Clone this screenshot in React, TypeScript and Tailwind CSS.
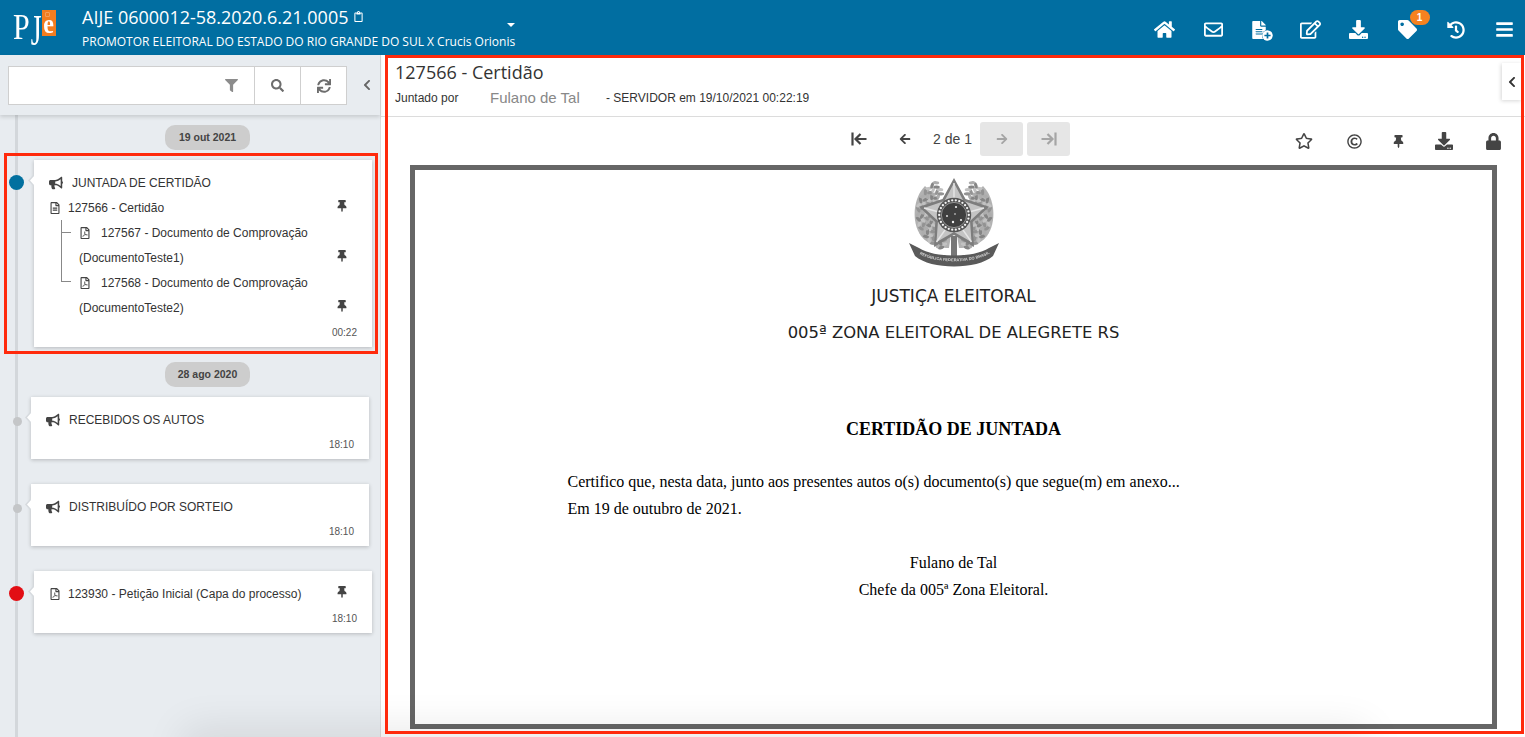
import React from "react";
import {
  FaHome, FaRegEnvelope, FaFileAlt, FaPlusCircle, FaRegEdit, FaDownload, FaTag, FaHistory, FaBars,
  FaFilter, FaSearch, FaSync, FaChevronLeft, FaBullhorn, FaThumbtack, FaRegFileAlt, FaRegFilePdf,
  FaRegStar, FaRegCopyright, FaLock, FaArrowLeft, FaArrowRight, FaRegClipboard,
} from "react-icons/fa";

function BarArrow({ dir, className }: { dir: "left" | "right"; className?: string }) {
  return (
    <svg viewBox="0 0 16 14" width="16" height="14" className={className} fill="none" stroke="currentColor" strokeWidth="2.2">
      {dir === "left" ? (
        <>
          <path d="M1.5 0.5V13.5" />
          <path d="M15.5 7H4.5M9.5 2L4.5 7L9.5 12" />
        </>
      ) : (
        <>
          <path d="M14.5 0.5V13.5" />
          <path d="M0.5 7H11.5M6.5 2L11.5 7L6.5 12" />
        </>
      )}
    </svg>
  );
}

function Brasao() {
  const dots = Array.from({ length: 26 }, (_, i) => {
    const a = (i / 26) * Math.PI * 2;
    return [45 + 14.8 * Math.cos(a), 37 + 14.8 * Math.sin(a)];
  });
  const leaves: { x: number; y: number; r: number; c: string }[] = [];
  for (let ring = 0; ring < 4; ring++) {
    const rad = 24 + ring * 4;
    for (let i = 0; i < 18; i++) {
      const deg = 108 + i * 7.6 + (ring % 2) * 3;
      const a = (deg * Math.PI) / 180;
      const c = ["#adadad", "#939393", "#c2c2c2", "#858585"][(i + ring) % 4];
      leaves.push({ x: Math.cos(a) * rad, y: Math.sin(a) * rad, r: deg + 90 + (i % 2 ? 35 : -35), c });
    }
  }
  return (
    <svg viewBox="0 0 90 90" width="90" height="90" className="blur-[0.5px]">
      <path d="M16 8C4 20 2 44 12 58C20 68 32 70 40 70L45 37Z" fill="#b2b2b2" />
      <path d="M74 8C86 20 88 44 78 58C70 68 58 70 50 70L45 37Z" fill="#b2b2b2" />
      {leaves.map((l, i) => (
        <g key={i}>
          <ellipse cx={45 + l.x} cy={36 + l.y} rx="3.2" ry="1.6" fill={l.c} transform={`rotate(${l.r} ${45 + l.x} ${36 + l.y})`} />
          <ellipse cx={45 - l.x} cy={36 + l.y} rx="3.2" ry="1.6" fill={l.c} transform={`rotate(${-l.r} ${45 - l.x} ${36 + l.y})`} />
        </g>
      ))}
      <rect x="42" y="58" width="6" height="20" fill="#777" />
      <polygon points="45,0 56.5,21 80,28.7 63.7,44 65,69 45,57 25,69 26.3,44 10,28.7 33.5,21" fill="#7d7d7d" />
      <polygon points="45,5 54.5,23 75,30 61,43 62.5,64 45,54 27.5,64 29,43 15,30 35.5,23" fill="#c4c4c4" />
      <path d="M45 5V20M15 30L30 34M75 30L60 34M27.5 64L36 52M62.5 64L54 52" stroke="#e6e6e6" strokeWidth="1.4" />
      <circle cx="45" cy="37" r="17.2" fill="#565656" />
      <circle cx="45" cy="37" r="12.6" fill="#3f3f3f" stroke="#dcdcdc" strokeWidth="0.5" />
      {dots.map(([x, y], i) => <circle key={i} cx={x} cy={y} r="1.15" fill="#f4f4f4" />)}
      <g fill="#efefef">
        <circle cx="47" cy="29" r="1.1" /><circle cx="44" cy="44" r="1.2" /><circle cx="38" cy="38" r="0.9" /><circle cx="46" cy="36" r="0.8" /><circle cx="52" cy="42" r="1.1" />
      </g>
      <path d="M0 65L10 70C25 80 65 80 80 70L90 65L84 78C68 92 22 92 6 78Z" fill="#5a5a5a" />
      <path id="fita-brasao" d="M9 75C24 86 66 86 81 75" fill="none" />
      <text fontSize="4" fontWeight="700" fill="#d8d8d8" fontFamily="'Liberation Sans', sans-serif">
        <textPath href="#fita-brasao" startOffset="2">REPÚBLICA FEDERATIVA DO BRASIL</textPath>
      </text>
    </svg>
  );
}

function Pill({ children }: { children: React.ReactNode }) {
  return (
    <div className="flex justify-center pl-[35px]">
      <div className="flex h-[25px] w-[85px] items-center justify-center rounded-[10px] bg-[#cdcdcd] text-[10.5px] font-bold text-[#444]">
        {children}
      </div>
    </div>
  );
}

function Card({ dot, children, inset, time }: { dot: "blue" | "gray" | "red"; children: React.ReactNode; inset?: boolean; time: string }) {
  return (
    <div className={`relative bg-white shadow-[0_1px_4px_rgba(0,0,0,0.22)] ${inset ? "ml-[31px] mr-[11px]" : "ml-[34px] mr-[8px]"}`}>
      <div className="absolute left-[-6px] top-[14px] h-[13px] w-[6px] bg-[#d6dade] [clip-path:polygon(100%_0,0_50%,100%_100%)]" />
      <div className="absolute left-[-4px] top-[15px] h-[11px] w-[5px] bg-white [clip-path:polygon(100%_0,0_50%,100%_100%)]" />
      {dot === "blue" && <div className="absolute left-[-25.5px] top-[15px] h-[15px] w-[15px] rounded-full bg-[#02709f]" />}
      {dot === "red" && <div className="absolute left-[-25.5px] top-[15px] h-[15px] w-[15px] rounded-full bg-[#e20e14]" />}
      {dot === "gray" && <div className="absolute left-[-18.5px] top-[19.5px] h-[9px] w-[9px] rounded-full bg-[#c4c6c8]" />}
      <div className="pl-[15px] pr-[15px] pt-[10px]">
        {children}
        <div className="mt-[5px] flex h-[15px] items-center justify-end text-[10px] text-[#555]">{time}</div>
        <div className="h-[7px]" />
      </div>
    </div>
  );
}

function Row({ children, pin, className = "" }: { children?: React.ReactNode; pin?: boolean; className?: string }) {
  return (
    <div className={`flex h-[25px] items-center text-[12px] text-[#333] ${className}`}>
      <div className="flex flex-1 items-center">{children}</div>
      {pin && <FaThumbtack className="mr-[9px] mt-[-3px] text-[12px] text-[#444]" />}
    </div>
  );
}

function Evento({ text }: { text: string }) {
  return (
    <>
      <FaBullhorn className="mr-[9px] text-[14px] text-[#444]" />
      <span>{text}</span>
    </>
  );
}

export default function App() {
  const fontOpen = "font-['Open_Sans',sans-serif]";
  return (
    <div className="relative flex h-screen w-full flex-col overflow-hidden bg-white font-['Liberation_Sans',Arial,sans-serif]">
      {/* Cabeçalho */}
      <header className="flex h-[55px] shrink-0 items-center bg-[#016ea1] pr-[6px] text-white">
        <div className="relative ml-[13px] flex h-[55px] w-[69px] shrink-0 font-['Liberation_Serif',serif]">
          <span className="mt-[6px] inline-block h-[36px] origin-top scale-y-[1.18] text-[30px] leading-[36px]">P</span>
          <span className="ml-[1px] mt-[3px] inline-block h-[36px] w-[11px] origin-top scale-y-[1.55] text-[28px] leading-[36px]">J</span>
          <div className="relative mt-[10px] flex h-[26px] w-[14px] items-end justify-center bg-[#f37d20] pb-[3px] font-bold">
            <span className="absolute left-[3px] top-[2px] h-[5px] w-[5px] rounded-[1px] border border-white/25" />
            <span className="inline-block origin-bottom scale-y-[1.15] text-[24px] leading-[16px]">e</span>
          </div>
        </div>
        <div className={`${fontOpen} flex flex-col`}>
          <div className="mt-[-1px] flex h-[24px] items-center text-[18px] leading-[24px]">
            AIJE 0600012-58.2020.6.21.0005
            <FaRegClipboard className="ml-[5px] text-[11px]" />
          </div>
          <div className="mt-[5px] text-[12px] leading-[16px]">PROMOTOR ELEITORAL DO ESTADO DO RIO GRANDE DO SUL X Crucis Orionis</div>
        </div>
        <div className="mb-[6px] ml-[-8px] h-0 w-0 self-center border-x-[4px] border-t-[4px] border-x-transparent border-t-white" />
        <div className="ml-auto mt-[4px] flex items-center gap-[18.5px]">
          <div className="flex w-[30px] justify-center"><FaHome className="text-[21px]" /></div>
          <div className="flex w-[30px] justify-center"><FaRegEnvelope className="text-[19px]" /></div>
          <div className="flex w-[30px] justify-center">
            <div className="relative mr-[5px]">
              <FaFileAlt className="text-[18px]" />
              <FaPlusCircle className="absolute bottom-[-2px] right-[-5px] rounded-full bg-[#016ea1] text-[11px] text-white" />
            </div>
          </div>
          <div className="flex w-[30px] justify-center"><FaRegEdit className="text-[21px]" /></div>
          <div className="flex w-[30px] justify-center"><FaDownload className="text-[19px]" /></div>
          <div className="flex w-[30px] justify-center">
            <div className="relative">
              <FaTag className="text-[19px]" />
              <span className="absolute left-[12px] top-[-10px] flex h-[15px] w-[20px] items-center justify-center rounded-full bg-[#f58220] text-[10px] font-bold">1</span>
            </div>
          </div>
          <div className="flex w-[30px] justify-center"><FaHistory className="text-[18px]" /></div>
          <div className="flex w-[30px] justify-center"><FaBars className="text-[19px]" /></div>
        </div>
      </header>

      <div className="flex min-h-0 flex-1">
        {/* Coluna da linha do tempo */}
        <aside className="relative flex w-[380px] shrink-0 flex-col bg-[#e8ecf0]">
          <div className="absolute bottom-0 left-[15px] top-[60px] w-[3px] bg-[#d3d7db]" />
          <div className="relative z-10 flex h-[60px] shrink-0 items-center pl-[8px] shadow-[0_2px_4px_rgba(0,0,0,0.14)]">
            <div className="mt-[1px] flex h-[39px] w-[339px] border border-[#cfcfcf] bg-white text-[#6d6d6d]">
              <div className="flex flex-1 items-center justify-end pr-[16px]"><FaFilter className="text-[13px] text-[#8c8c8c]" /></div>
              <div className="flex w-[46px] items-center justify-center border-l border-[#cfcfcf]"><FaSearch className="text-[13px]" /></div>
              <div className="flex w-[46px] items-center justify-center border-l border-[#cfcfcf]"><FaSync className="text-[14px]" /></div>
            </div>
            <FaChevronLeft className="ml-[14px] text-[12px] text-[#666]" />
          </div>
          <div className="relative flex flex-col pt-[10px]">
            <Pill>19 out 2021</Pill>
            <div className="mt-[10px]">
              <Card dot="blue" time="00:22">
                <div className="absolute left-[27px] top-[60px] h-[62px] w-[10px] border-b border-l border-[#888]" />
                <div className="absolute left-[27px] top-[72px] h-px w-[10px] bg-[#888]" />
                <Row><span className="flex items-center"><FaBullhorn className="mr-[9px] text-[14px] text-[#444]" /><span>JUNTADA DE CERTIDÃO</span></span></Row>
                <Row pin><FaRegFileAlt className="mr-[10px] text-[12px] text-[#444]" /><span className="ml-[-3px]">127566 - Certidão</span></Row>
                <Row className="pl-[30px]"><FaRegFilePdf className="mr-[10px] text-[12px] text-[#444]" /><span>127567 - Documento de Comprovação</span></Row>
                <Row pin className="pl-[30px]"><span>(DocumentoTeste1)</span></Row>
                <Row className="pl-[30px]"><FaRegFilePdf className="mr-[10px] text-[12px] text-[#444]" /><span>127568 - Documento de Comprovação</span></Row>
                <Row pin className="pl-[30px]"><span>(DocumentoTeste2)</span></Row>
              </Card>
            </div>
            <div className="mt-[15px]"><Pill>28 ago 2020</Pill></div>
            <div className="mt-[10px]">
              <Card dot="gray" inset time="18:10"><Row><Evento text="RECEBIDOS OS AUTOS" /></Row></Card>
            </div>
            <div className="mt-[25px]">
              <Card dot="gray" inset time="18:10"><Row><Evento text="DISTRIBUÍDO POR SORTEIO" /></Row></Card>
            </div>
            <div className="mt-[25px]">
              <Card dot="red" time="18:10">
                <Row pin><FaRegFilePdf className="mr-[7px] text-[12px] text-[#444]" /><span>123930 - Petição Inicial (Capa do processo)</span></Row>
              </Card>
            </div>
          </div>
        </aside>

        {/* Documento */}
        <main className="relative flex min-w-0 flex-1 flex-col border-l border-[#dcdcdc] bg-white">
          <div className="flex h-[62px] shrink-0 flex-col border-b border-[#dcdcdc] pl-[14px]">
            <div className={`${fontOpen} mt-[5px] text-[18px] leading-[24px] text-[#333]`}>127566 - Certidão</div>
            <div className="mt-[4px] flex h-[20px] items-center text-[12px] text-[#333]">
              <span className="w-[95px]">Juntado por</span>
              <span className="w-[116px] text-[15px] text-[#888]">Fulano de Tal</span>
              <span>- SERVIDOR em 19/10/2021 00:22:19</span>
            </div>
          </div>
          <div className="absolute right-[3px] top-[8px] flex h-[37px] w-[20px] items-center justify-center bg-white shadow-[-1px_1px_4px_rgba(0,0,0,0.16)]">
            <FaChevronLeft className="text-[12px] text-[#333]" />
          </div>
          <div className="relative flex h-[48px] shrink-0 items-center text-[#444]">
            <div className="ml-[470px] mt-[-4px] flex items-center">
              <BarArrow dir="left" className="mr-[32px]" />
              <FaArrowLeft className="text-[12px]" />
              <span className="ml-[22px] w-[47px] text-[14px]">2 de 1</span>
              <div className="flex h-[34px] w-[43px] items-center justify-center rounded-[3px] bg-[#e6e6e6] text-[#a5a5a5]"><FaArrowRight className="text-[12px]" /></div>
              <div className="ml-[4px] flex h-[34px] w-[43px] items-center justify-center rounded-[3px] bg-[#e6e6e6] text-[#a5a5a5]"><BarArrow dir="right" /></div>
            </div>
            <div className="ml-auto mr-[22px] flex items-center">
              <div className="flex w-[20px] justify-center"><FaRegStar className="text-[18px]" /></div>
              <div className="ml-[30px] flex w-[20px] justify-center"><FaRegCopyright className="text-[15px]" /></div>
              <div className="ml-[24px] flex w-[20px] justify-center"><FaThumbtack className="text-[13px]" /></div>
              <div className="ml-[26px] flex w-[20px] justify-center"><FaDownload className="text-[18px]" /></div>
              <div className="ml-[29px] flex w-[20px] justify-center"><FaLock className="text-[17px]" /></div>
            </div>
          </div>
          <div className="mb-[8px] ml-[29px] mr-[28px] flex min-h-0 w-[1087px] flex-1 flex-col items-center border-[5px] border-[#666] bg-white">
            <div className="mt-[8px]"><Brasao /></div>
            <div className="mt-[18px] font-['DejaVu_Sans',sans-serif] text-[17px] leading-[20px] text-[#222]">JUSTIÇA ELEITORAL</div>
            <div className="mt-[17px] font-['DejaVu_Sans',sans-serif] text-[16.4px] leading-[20px] text-[#222]">005ª ZONA ELEITORAL DE ALEGRETE RS</div>
            <div className="mt-[74px] font-['Liberation_Serif',serif] text-[18px] font-bold leading-[24px] text-black">CERTIDÃO DE JUNTADA</div>
            <div className="mt-[27px] w-[772px] font-['Liberation_Serif',serif] text-[16px] leading-[27px] text-black">
              <p>Certifico que, nesta data, junto aos presentes autos o(s) documento(s) que segue(m) em anexo...</p>
              <p>Em 19 de outubro de 2021.</p>
            </div>
            <div className="mt-[27px] text-center font-['Liberation_Serif',serif] text-[16px] leading-[27px] text-black">
              <p>Fulano de Tal</p>
              <p>Chefe da 005ª Zona Eleitoral.</p>
            </div>
          </div>
        </main>
      </div>

      {/* Sombra difusa inferior */}
      <div className="pointer-events-none absolute left-[205px] top-[750px] h-[10px] w-[1140px] shadow-[0_0_40px_22px_rgba(0,0,0,0.09)]" />
      {/* Marcações em vermelho */}
      <div className="pointer-events-none absolute left-[385px] top-[55px] h-[679px] w-[1139px] border-[3px] border-[#ff2a0c]" />
      <div className="pointer-events-none absolute left-[4px] top-[153px] h-[201px] w-[374px] border-[3px] border-[#ff2a0c]" />
    </div>
  );
}
